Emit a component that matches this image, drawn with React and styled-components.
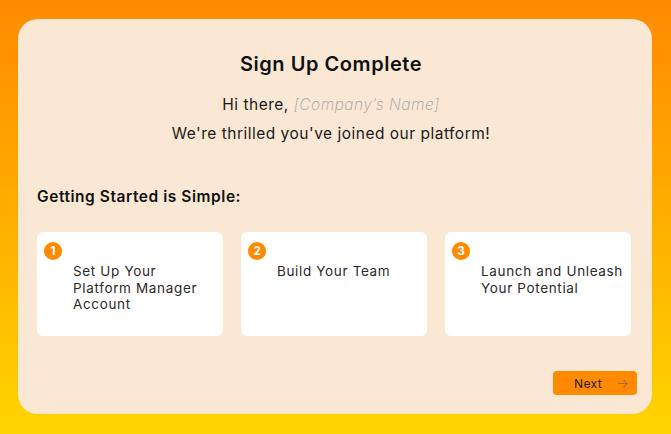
import React from "react";
import styled, { createGlobalStyle } from "styled-components";

const Global = createGlobalStyle`
  html, body { margin: 0; padding: 0; }
  body { font-family: Inter, "Open Sans", sans-serif; }
  * { box-sizing: border-box; }
`;

const Page = styled.div`
  width: 671px;
  height: 434px;
  padding: 19px 19px 20px 18px;
  background: linear-gradient(180deg, #ff8a00 0%, #ffd400 100%);
`;

const Panel = styled.div`
  height: 100%;
  background: #fae8d5;
  border-radius: 20px;
  padding: 33px 27px 0 19px;
  display: flex;
  flex-direction: column;
`;

const Title = styled.h1`
  margin: 0;
  text-align: center;
  font-size: 20px;
  line-height: 24px;
  font-weight: 600;
  letter-spacing: 0.55px;
  color: #111;
`;

const Line = styled.p`
  margin: ${(p) => p.$mt}px 0 0;
  text-align: center;
  font-size: 15.5px;
  line-height: 22px;
  letter-spacing: 0.5px;
  color: #1a1a1a;
`;

const Placeholder = styled.span`
  font-style: italic;
  font-weight: 200;
  color: #a0a0a0;
`;

const Section = styled.h2`
  margin: 41px 0 0;
  font-size: 15.5px;
  line-height: 22px;
  font-weight: 600;
  letter-spacing: 0.55px;
  color: #111;
`;

const Steps = styled.div`
  margin: 24px -6px 0 0;
  display: grid;
  grid-template-columns: repeat(3, 1fr);
  column-gap: 18px;
`;

const Step = styled.div`
  height: 104px;
  background: #fff;
  border-radius: 6px;
  padding: 10px 7px;
`;

const Badge = styled.div`
  width: 18px;
  height: 18px;
  border-radius: 50%;
  background: #ff8a00;
  color: #fff;
  font-size: 11.5px;
  font-weight: 700;
  display: flex;
  align-items: center;
  justify-content: center;
`;

const StepText = styled.div`
  margin: 3px 0 0 29px;
  font-size: 13.5px;
  line-height: 16.5px;
  letter-spacing: 0.65px;
  color: #2a2a2a;
`;

const Footer = styled.div`
  margin: 35px -12px 0 0;
  display: flex;
  justify-content: flex-end;
`;

const NextButton = styled.button`
  width: 84px;
  height: 24px;
  border: none;
  border-radius: 4px;
  background: #ff8a00;
  display: flex;
  align-items: center;
  padding: 0 0 0 21px;
  gap: 15px;
  font-family: inherit;
  font-size: 12px;
  letter-spacing: 0.4px;
  color: #1a1a1a;
`;

const Arrow = styled.svg`
  width: 11px;
  height: 11px;
`;

const steps = [
  ["Set Up Your", "Platform Manager", "Account"],
  ["Build Your Team"],
  ["Launch and Unleash", "Your Potential"],
];

export default function App() {
  return (
    <>
      <Global />
      <Page>
        <Panel>
          <Title>Sign Up Complete</Title>
          <Line $mt={18}>
            Hi there, <Placeholder>[Company’s Name]</Placeholder>
          </Line>
          <Line $mt={7}>We're thrilled you've joined our platform!</Line>
          <Section>Getting Started is Simple:</Section>
          <Steps>
            {steps.map((lines, i) => (
              <Step key={i}>
                <Badge>{i + 1}</Badge>
                <StepText>
                  {lines.map((l, j) => (
                    <div key={j}>{l}</div>
                  ))}
                </StepText>
              </Step>
            ))}
          </Steps>
          <Footer>
            <NextButton>
              Next
              <Arrow viewBox="0 0 12 12" fill="none" stroke="#a06a3a" strokeWidth="1.1">
                <path d="M1 6h10M7 2l4 4-4 4" />
              </Arrow>
            </NextButton>
          </Footer>
        </Panel>
      </Page>
    </>
  );
}
